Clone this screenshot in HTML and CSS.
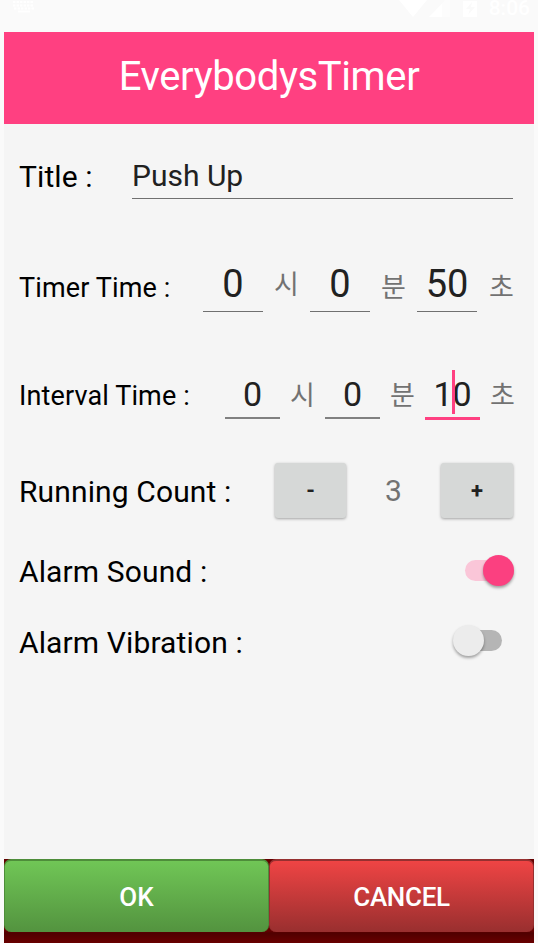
FILE: index.html
```html
<!DOCTYPE html>
<html lang="ko">
<head>
<meta charset="utf-8">
<title>EverybodysTimer</title>
<link rel="stylesheet" href="styles.css">
</head>
<body>
<div class="status">
  <svg class="keyboard" width="22" height="13" viewBox="0 0 22 13" fill="none" stroke="#fff">
    <path d="M0 2h21M0 5.500h21M1 8.500h20" stroke-width="2" stroke-dasharray="2.500 1"/>
    <path d="M5 11.500h12" stroke-width="2"/>
  </svg>
  <svg class="signals" width="80" height="18" viewBox="0 0 80 18" fill="#fff">
    <path d="M0 0h28L14 17z"/>
    <path d="M30 17h21V0h-5z" opacity=".4"/>
    <path d="M30 17h13V4z"/>
    <path fill-rule="evenodd" d="M64 1h14v16H64zM73 2l-6 7h4l-2 6 7-8h-4z"/>
  </svg>
  <span class="clock">8:06</span>
</div>
<main class="screen">
  <h1 class="bar">EverybodysTimer</h1>
  <div class="row row-title">
    <span class="label">Title :</span>
    <div class="name">Push Up</div>
  </div>
  <div class="row row-timer">
    <span class="label small">Timer Time :</span>
    <div class="time">
      <span class="num">0</span><span class="unit unit-hour">시</span>
      <span class="num">0</span><span class="unit">분</span>
      <span class="num">50</span><span class="unit">초</span>
    </div>
  </div>
  <div class="row row-interval">
    <span class="label small">Interval Time :</span>
    <div class="time">
      <span class="num">0</span><span class="unit">시</span>
      <span class="num">0</span><span class="unit">분</span>
      <span class="num focused">10<i class="caret"></i></span><span class="unit">초</span>
    </div>
  </div>
  <div class="row row-count">
    <span class="label">Running Count :</span>
    <div class="stepper">
      <button class="step">-</button>
      <span class="count">3</span>
      <button class="step">+</button>
    </div>
  </div>
  <div class="row row-sound">
    <span class="label">Alarm Sound :</span>
    <div class="switch on"><i class="thumb"></i></div>
  </div>
  <div class="row row-vibration">
    <span class="label">Alarm Vibration :</span>
    <div class="switch off"><i class="thumb"></i></div>
  </div>
  <div class="actions">
    <button class="action ok">OK</button>
    <button class="action cancel">CANCEL</button>
  </div>
</main>
</body>
</html>
```

FILE: styles.css
```css
* { box-sizing: border-box; }

body {
  margin: 0;
  height: 943px;
  overflow: hidden;
  background: #fafafa;
  color: #000;
  font-family: Roboto, "Noto Sans CJK KR", sans-serif;
}

.status {
  height: 32px;
  display: flex;
  align-items: flex-start;
  padding: 0 8px 0 13px;
  color: #fff;
}
.signals { margin-left: auto; }
.clock {
  margin-left: 10px;
  font-size: 21px;
  font-weight: 500;
  line-height: 16px;
}

.screen {
  width: 530px;
  height: 911px;
  margin-left: 4px;
  display: flex;
  flex-direction: column;
  background: #f5f5f5;
}

.bar {
  height: 92px;
  margin: 0;
  padding-bottom: 4px;
  background: #ff4081;
  color: #fff;
  font-size: 40px;
  font-weight: 400;
  letter-spacing: -.37px;
  line-height: 89px;
  text-align: center;
}

.row {
  display: flex;
  align-items: center;
  justify-content: space-between;
  padding: 0 21px 0 15px;
}
.row-title { height: 106px; }
.row-timer { height: 115px; }
.row-interval { height: 101px; padding-right: 20px; }
.row-count { height: 91px; }
.row-sound { height: 69px; }
.row-vibration { height: 73px; }

.label { font-size: 30px; line-height: 36px; white-space: nowrap; letter-spacing: .12px; }
.small { font-size: 27px; }

.name {
  width: 381px;
  height: 44px;
  border-bottom: 1px solid #707070;
  color: #212121;
  font-size: 30px;
  line-height: 42px;
}

.time { display: flex; align-items: center; }
.num {
  position: relative;
  color: #212121;
  text-align: center;
}
.unit {
  color: #727272;
  font-family: "Noto Sans CJK KR", sans-serif;
  font-size: 27px;
  font-weight: 400;
  line-height: 40px;
  text-align: center;
}
.row-timer .num {
  width: 60px;
  height: 56px;
  margin-bottom: 8px;
  border-bottom: 1px solid #707070;
  font-size: 38px;
  line-height: 57px;
}
.row-timer .unit { width: 24px; margin: 0 0 3px 11px; }
.row-timer .unit + .num { margin-left: 12px; }
.row-timer .unit:last-child { margin-left: 12px; }
.row-timer .unit-hour { margin-bottom: 9px; }

.row-interval .time { margin-bottom: 2px; }
.row-interval .num {
  width: 55px;
  height: 48px;
  border-bottom: 2px solid #808080;
  font-size: 34px;
  line-height: 46px;
}
.row-interval .unit { width: 24px; margin: 0 0 2px 10px; }
.row-interval .unit + .num { margin-left: 11px; }
.row-interval .focused { height: 50px; border-bottom: 3px solid #ff4081; line-height: 48px; }
.caret {
  position: absolute;
  left: 27px;
  top: 0;
  width: 3px;
  height: 44px;
  background: #ff4081;
}

.stepper { display: flex; align-items: center; margin-bottom: 2px; }
.step {
  width: 72px;
  height: 55px;
  padding: 0;
  border: 0;
  border-radius: 3px;
  background: #d6d8d7;
  box-shadow: 0 1px 3px rgba(0, 0, 0, .35);
  color: #212121;
  font: 700 22px Roboto, sans-serif;
}
.step:first-child { width: 71px; }
.count {
  width: 95px;
  color: #727272;
  font-size: 30px;
  text-align: center;
}

.switch {
  display: flex;
  align-items: center;
  width: 49px;
  height: 21px;
  border-radius: 11px;
}
.thumb {
  width: 31px;
  height: 31px;
  flex: none;
  border-radius: 50%;
  box-shadow: 0 2px 3px rgba(0, 0, 0, .35);
}
.on { justify-content: flex-end; background: #fac6d8; margin: 0 -1px 3px 0; }
.on .thumb { background: #fb4080; }
.off { background: linear-gradient(90deg, transparent 20px, #b5b5b5 20px); margin: 0 11px 4px 0; }
.off .thumb { background: #ececec; }

.actions {
  display: grid;
  grid-template-columns: 265px 265px;
  align-items: start;
  height: 84px;
  margin-top: auto;
  background: linear-gradient(#640000 72px, #500000 74px, #690000);
}
.action {
  height: 73px;
  padding: 0;
  border: 1px solid;
  border-top-width: 2px;
  border-bottom-width: 0;
  border-radius: 7px;
  color: #fff;
  font: 500 26px Roboto, sans-serif;
}
.ok {
  border-color: #4e8d3a;
  background: linear-gradient(#70c656, #53933f);
}
.cancel {
  border-color: #963030;
  background: linear-gradient(#ef4444, #992f2f);
  letter-spacing: -.3px;
}
```
